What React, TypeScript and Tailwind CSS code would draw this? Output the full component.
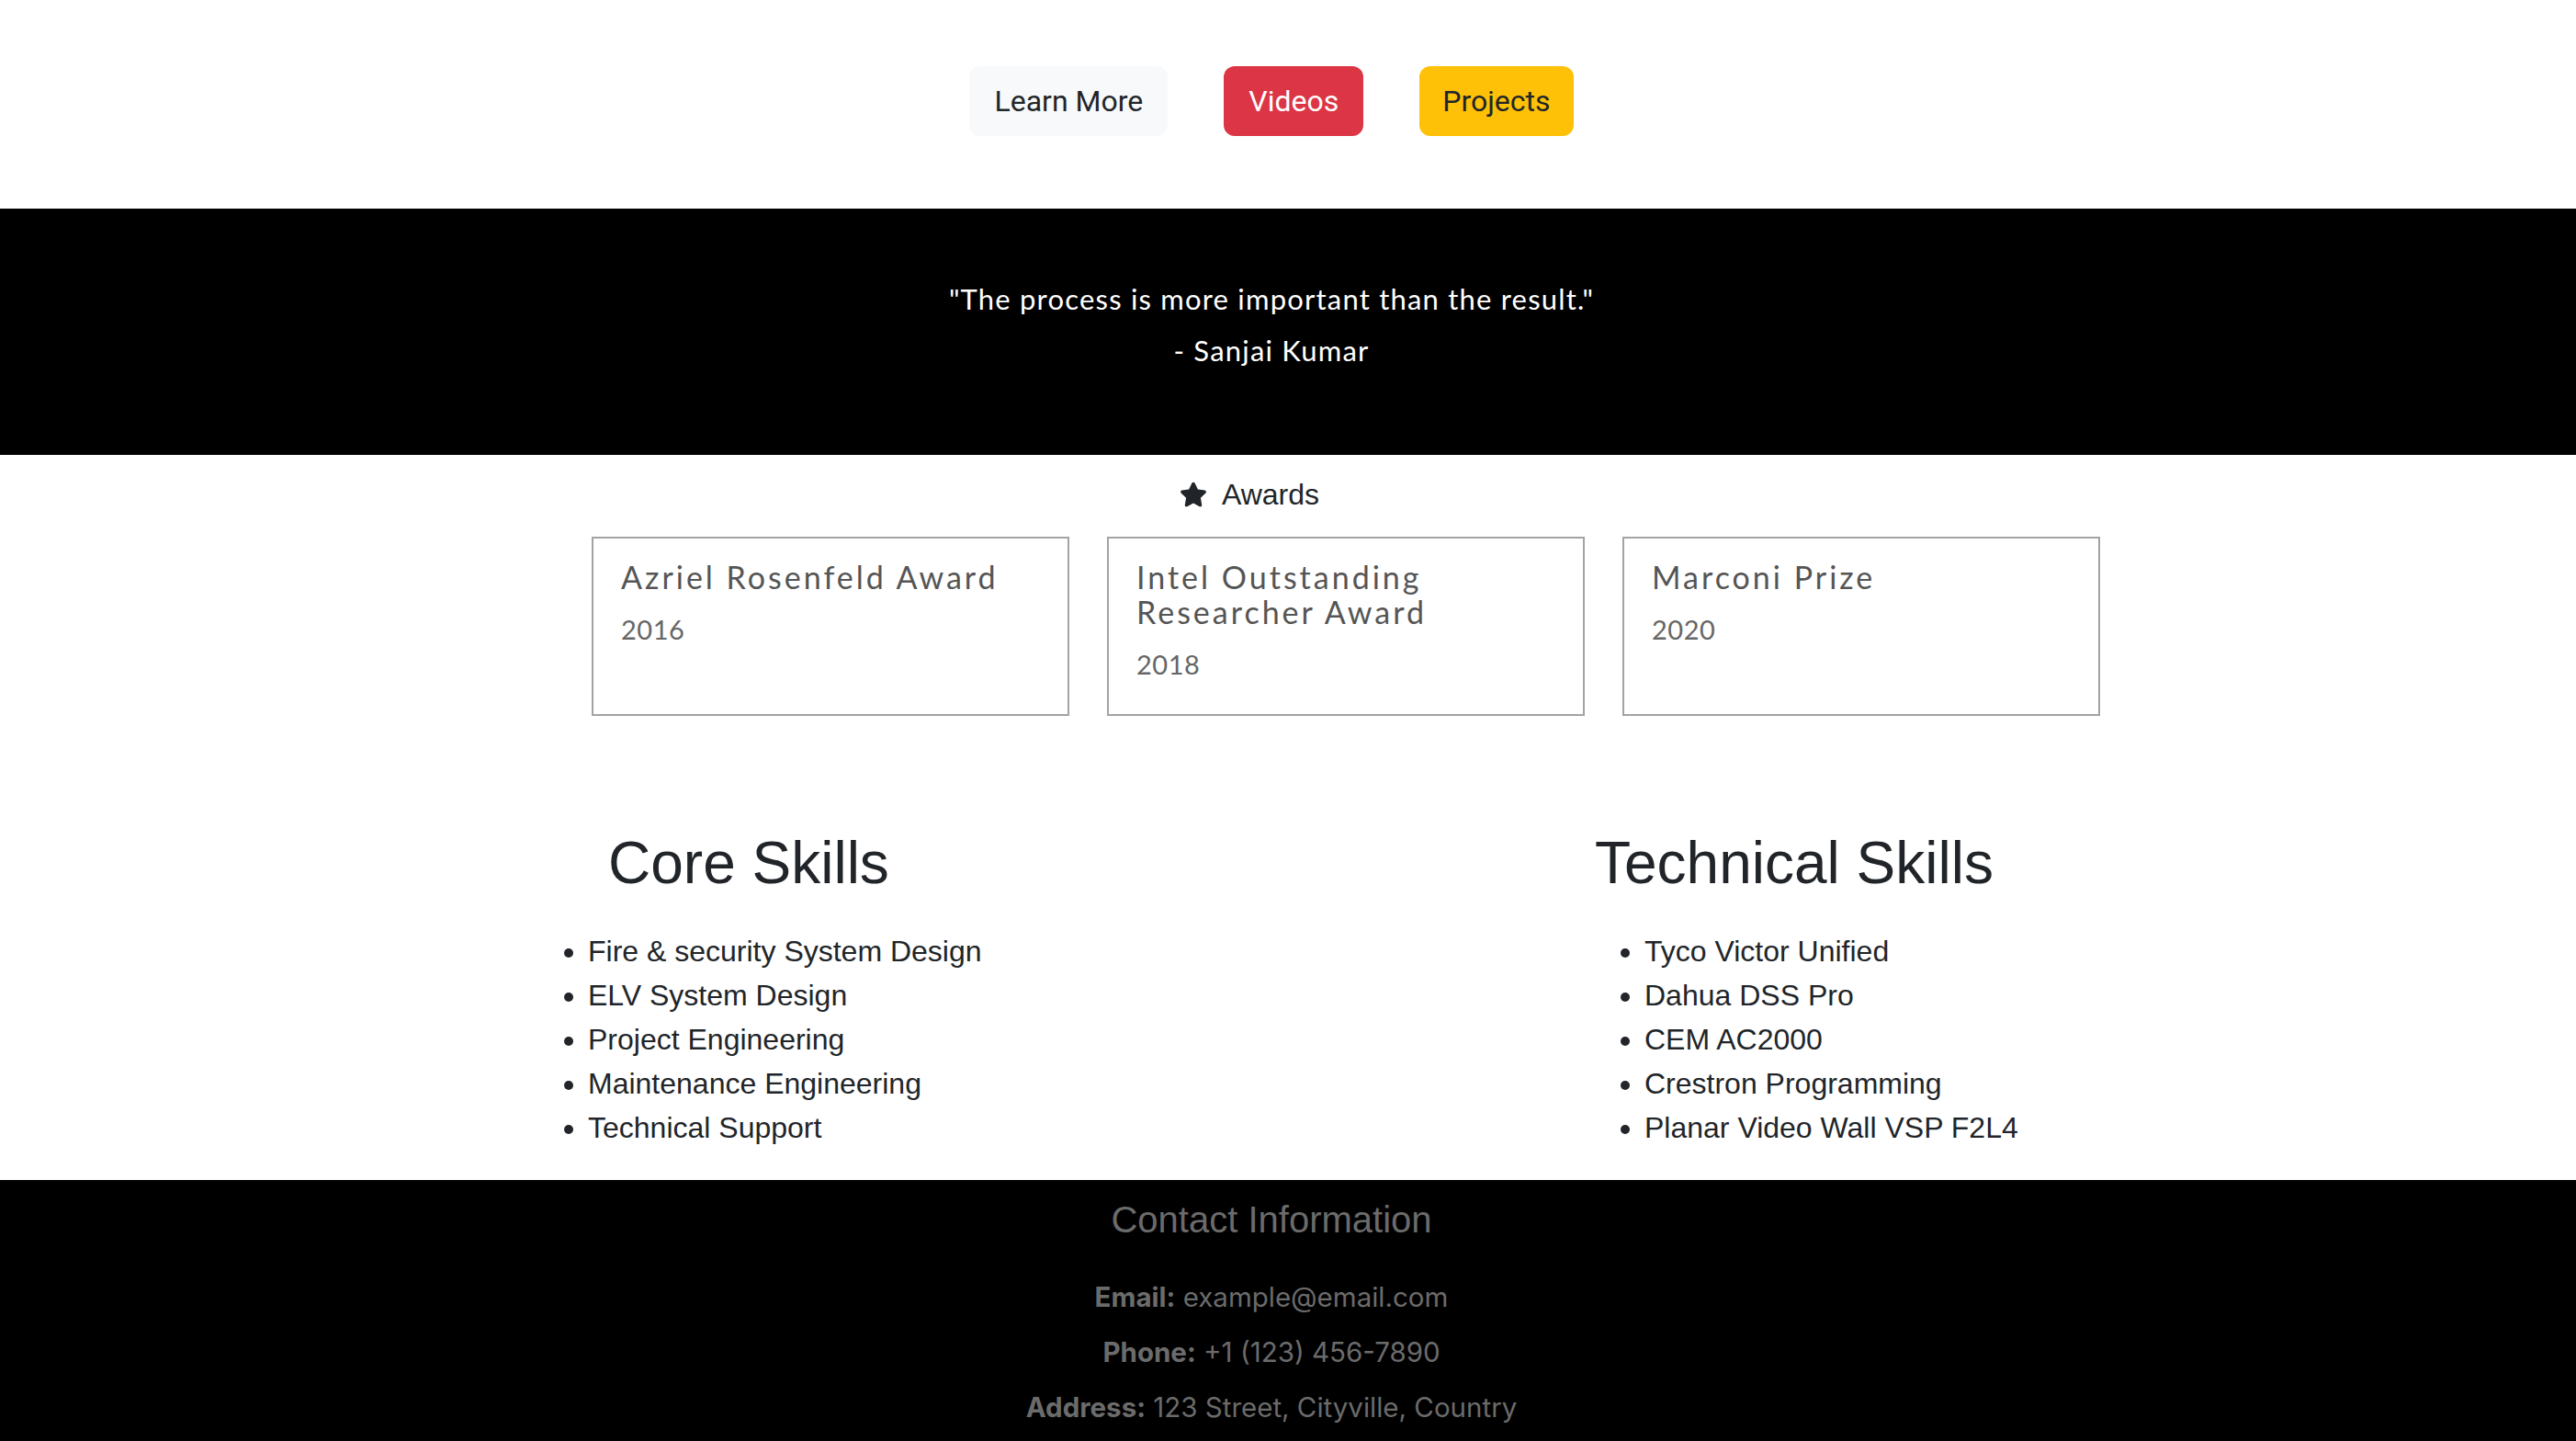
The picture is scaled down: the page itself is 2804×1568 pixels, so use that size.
const awards = [
  { title: "Azriel Rosenfeld Award", year: "2016" },
  { title: "Intel Outstanding Researcher Award", year: "2018" },
  { title: "Marconi Prize", year: "2020" },
];

const coreSkills = [
  "Fire & security System Design",
  "ELV System Design",
  "Project Engineering",
  "Maintenance Engineering",
  "Technical Support",
];

const techSkills = [
  "Tyco Victor Unified",
  "Dahua DSS Pro",
  "CEM AC2000",
  "Crestron Programming",
  "Planar Video Wall VSP F2L4",
];

const StarIcon = () => (
  <svg viewBox="0 0 576 512" className="w-[30px] h-[28px] fill-[#212529]">
    <path d="M259.3 17.8L194 150.2 47.9 171.5c-26.2 3.8-36.7 36.1-17.7 54.6l105.7 103-25 145.5c-4.5 26.3 23.2 46 46.4 33.7L288 439.6l130.7 68.7c23.2 12.2 50.9-7.4 46.4-33.7l-25-145.5 105.7-103c19-18.5 8.5-50.8-17.7-54.6L382 150.2 316.7 17.8c-11.7-23.6-45.6-23.9-57.4 0z" />
  </svg>
);

const SkillList = ({ items }: { items: string[] }) => (
  <ul className="list-disc pl-[64px] mt-[34px] text-[32px] leading-[48px] text-[#212529] font-['Liberation_Sans',Arial,sans-serif]">
    {items.map((s) => (
      <li key={s}>{s}</li>
    ))}
  </ul>
);

const App = () => {
  return (
    <div className="w-full min-h-screen bg-white">
      {/* buttons */}
      <div className="flex justify-center gap-[61px] pt-[72px] pb-[79px] pr-[36px] font-['Roboto',sans-serif] text-[32px]">
        <button className="h-[76px] px-[27px] rounded-[12px] bg-[#f8f9fa] text-[#212529]">
          Learn More
        </button>
        <button className="h-[76px] px-[27px] rounded-[12px] bg-[#dc3545] text-white">
          Videos
        </button>
        <button className="h-[76px] px-[25px] rounded-[12px] bg-[#ffc107] text-[#212529]">
          Projects
        </button>
      </div>

      {/* quote */}
      <section className="h-[268px] bg-black flex flex-col items-center pr-[36px] text-white font-['Lato',sans-serif] text-[31px] tracking-[1.2px]">
        <p className="mt-[78px] leading-[40px]">
          "The process is more important than the result."
        </p>
        <p className="mt-[16px] leading-[40px]">- Sanjai Kumar</p>
      </section>

      {/* awards */}
      <div className="flex justify-center items-center gap-[16px] mt-[23px] h-[40px] pr-[84px] text-[32px] text-[#212529] font-['Liberation_Sans',Arial,sans-serif]">
        <StarIcon />
        <span>Awards</span>
      </div>
      <div className="flex gap-[41px] pl-[644px] mt-[26px]">
        {awards.map((a) => (
          <div
            key={a.title}
            className="w-[520px] h-[195px] border-2 border-[#a3a3a3] px-[30px] pt-[23px] font-['Lato',sans-serif]"
          >
            <h5 className="text-[34px] leading-[38px] tracking-[3px] text-[#555]">
              {a.title}
            </h5>
            <p className="mt-[20px] text-[29px] leading-[36px] tracking-[0.5px] text-[#666]">
              {a.year}
            </p>
          </div>
        ))}
      </div>

      {/* skills */}
      <div className="flex mt-[122px] pb-[33px]">
        <div className="ml-[576px] w-[1150px]">
          <h2 className="ml-[86px] text-[64px] leading-[76px] text-[#212529] font-['Liberation_Sans',Arial,sans-serif]">
            Core Skills
          </h2>
          <SkillList items={coreSkills} />
        </div>
        <div>
          <h2 className="ml-[10px] text-[64px] leading-[76px] text-[#212529] font-['Liberation_Sans',Arial,sans-serif]">
            Technical Skills
          </h2>
          <SkillList items={techSkills} />
        </div>
      </div>

      {/* contact */}
      <footer className="bg-black flex flex-col items-center pr-[36px] pb-[24px] text-[#6b6b6b]">
        <h5 className="mt-[19px] h-[48px] leading-[48px] text-[40px] font-['Liberation_Sans',Arial,sans-serif]">
          Contact Information
        </h5>
        <div className="mt-[30px] font-['Inter',sans-serif] text-[29.5px]">
          <p className="h-[60px] leading-[60px] text-center">
            <span className="font-bold">Email:</span> example@email.com
          </p>
          <p className="h-[60px] leading-[60px] text-center">
            <span className="font-bold">Phone:</span> +1 (123) 456-7890
          </p>
          <p className="h-[60px] leading-[60px] text-center">
            <span className="font-bold">Address:</span> 123 Street, Cityville,
            Country
          </p>
        </div>
      </footer>
    </div>
  );
};

export default App;
